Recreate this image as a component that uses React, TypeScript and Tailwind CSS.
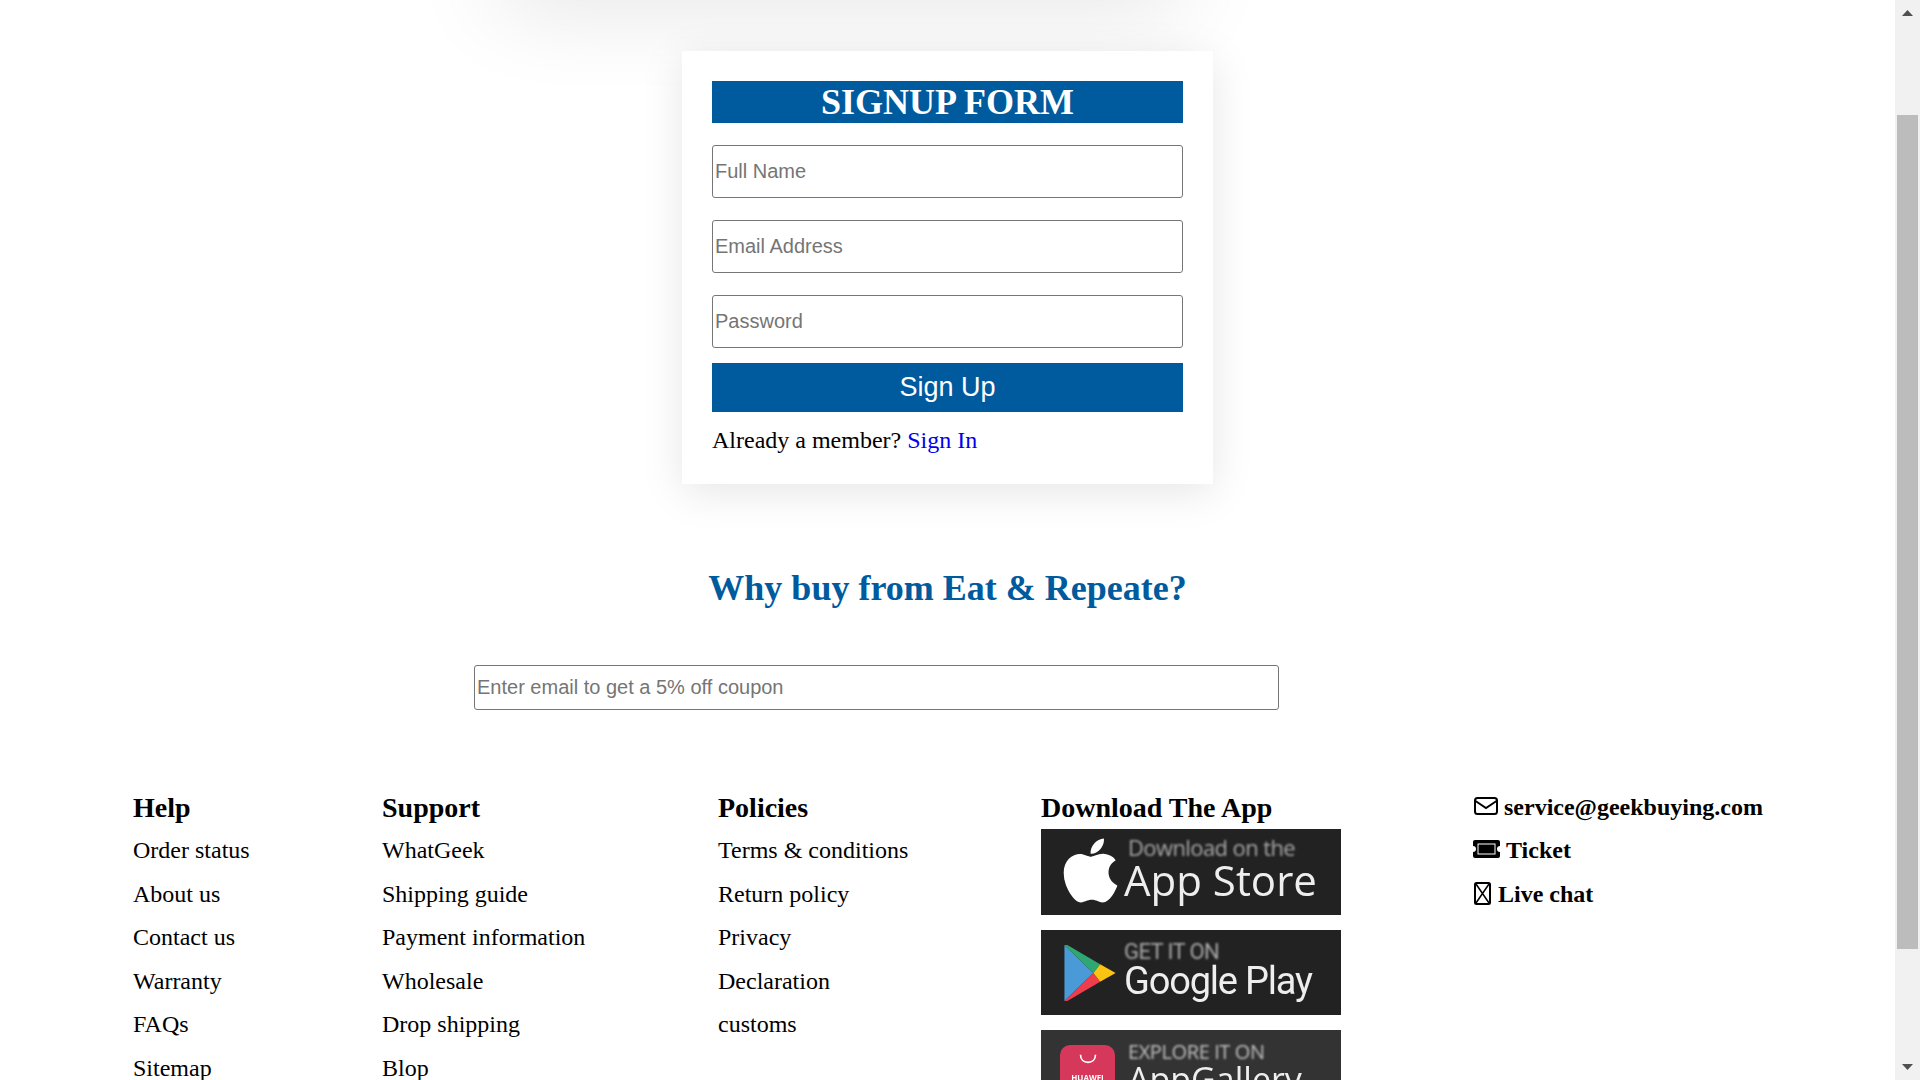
import React from "react";
import { FaApple } from "react-icons/fa";

const help = ["Order status", "About us", "Contact us", "Warranty", "FAQs", "Sitemap"];
const support = ["WhatGeek", "Shipping guide", "Payment information", "Wholesale", "Drop shipping", "Blop"];
const policies = ["Terms & conditions", "Return policy", "Privacy", "Declaration", "customs"];

function Column({ title, items, className }: { title: string; items: string[]; className: string }) {
  return (
    <div className={className}>
      <h3 className="text-[28px] font-bold leading-[25px] text-black">{title}</h3>
      <ul className="mt-[15px]">
        {items.map((i) => (
          <li key={i} className="h-[43.5px] text-[24px] leading-[30px] text-black">{i}</li>
        ))}
      </ul>
    </div>
  );
}

const inputClass =
  "block w-full h-[53px] border border-[#767676] rounded-[3px] px-[2px] text-[20px] font-['Liberation_Sans',sans-serif] placeholder:text-[#757575] bg-white outline-none";

function AppStore() {
  return (
    <div className="flex h-[86px] w-[300px] shrink-0 overflow-hidden bg-[#222222] pl-[13px] font-['Open_Sans',sans-serif] text-[#eeeeee]">
      <div className="mt-[5px] w-[70px] shrink-0 blur-[0.7px]"><FaApple size={73} color="#ffffff" /></div>
      <div className="flex flex-col whitespace-nowrap">
        <span className="ml-[4px] mt-[7px] text-[22px] leading-[22px] tracking-[-0.6px] text-[#a8a8a8] blur-[0.8px]">Download on the</span>
        <span className="text-[42px] leading-[44px] blur-[0.7px]">App Store</span>
      </div>
    </div>
  );
}

function GooglePlay() {
  return (
    <div className="flex h-[85px] w-[300px] shrink-0 overflow-hidden bg-[#222222] pl-[23px] font-['Roboto',sans-serif] text-[#eeeeee]">
      <svg className="mt-[15px] shrink-0 blur-[0.6px]" width="53" height="56" viewBox="0 0 54 58">
        <polygon points="0,0 30,29 0,58" fill="#4a9ad8" />
        <polygon points="0,0 3,0 37,20 30,29" fill="#2fa772" />
        <polygon points="0,58 3,58 37,38 30,29" fill="#ee3d4b" />
        <polygon points="37,20 53,29 37,38 30,29" fill="#fbc412" />
      </svg>
      <div className="ml-[7px] flex flex-col whitespace-nowrap">
        <span className="mt-[12px] text-[22px] leading-[20px] tracking-[-0.6px] text-[#a8a8a8] blur-[0.8px]">GET IT ON</span>
        <span className="text-[38px] leading-[38px] tracking-[-1.2px] blur-[0.7px]">Google Play</span>
      </div>
    </div>
  );
}

function AppGallery() {
  return (
    <div className="flex h-[85px] w-[300px] shrink-0 overflow-hidden bg-[#333333] pl-[19px] font-['Open_Sans',sans-serif] text-[#eeeeee]">
      <div className="mt-[15px] flex h-[55px] w-[55px] shrink-0 flex-col items-center rounded-[10px] bg-[#d5385a] blur-[0.6px]">
        <svg className="mt-[9px]" width="20" height="10" viewBox="0 0 22 12"><path d="M2 1c0 6 4 9 9 9s9-3 9-9" fill="none" stroke="#fff" strokeWidth="2" /></svg>
        <span className="mt-[9px] text-[8px] font-bold leading-[10px] text-white">HUAWEI</span>
      </div>
      <div className="ml-[13px] flex flex-col whitespace-nowrap">
        <span className="mt-[12px] text-[20px] leading-[20px] tracking-[-0.4px] text-[#c0c0c0] blur-[0.8px]">EXPLORE IT ON</span>
        <span className="text-[34px] leading-[34px] blur-[0.7px]">AppGallery</span>
      </div>
    </div>
  );
}

function ContactIcon({ kind }: { kind: "mail" | "ticket" | "chat" }) {
  if (kind === "mail")
    return (
      <svg width="24" height="18" viewBox="0 0 24 18" fill="none" stroke="#000" strokeWidth="2" className="shrink-0">
        <rect x="1" y="1" width="22" height="16" rx="2.5" />
        <path d="M1.5 4 L12 11 L22.5 4" />
      </svg>
    );
  if (kind === "ticket")
    return (
      <svg width="27" height="18" viewBox="0 0 27 18" className="shrink-0">
        <path d="M2 0h23a2 2 0 0 1 2 2v4a3 3 0 0 0 0 6v4a2 2 0 0 1-2 2H2a2 2 0 0 1-2-2v-4a3 3 0 0 0 0-6V2a2 2 0 0 1 2-2z" fill="#000" />
        <rect x="5" y="4" width="17" height="10" fill="#000" stroke="#fff" strokeWidth="1" />
      </svg>
    );
  return (
    <svg width="17" height="23" viewBox="0 0 17 23" fill="none" stroke="#000" strokeWidth="2" className="shrink-0">
      <rect x="1" y="1" width="15" height="21" rx="1.5" />
      <path d="M2 2 L15 21 M15 2 L2 21" strokeWidth="1.5" />
    </svg>
  );
}

function Scrollbar() {
  return (
    <div className="flex h-full w-[25px] shrink-0 flex-col items-center bg-[#f1f1f1]">
      <div className="flex h-[26px] w-full items-center justify-center">
        <svg width="11" height="6" viewBox="0 0 11 6"><polygon points="5.5,0 11,6 0,6" fill="#505050" /></svg>
      </div>
      <div className="h-[89px] shrink-0" />
      <div className="h-[834px] w-[21px] shrink-0 bg-[#bcbcbc]" />
      <div className="flex-1" />
      <div className="flex h-[26px] w-full items-center justify-center">
        <svg width="11" height="6" viewBox="0 0 11 6"><polygon points="0,0 11,0 5.5,6" fill="#505050" /></svg>
      </div>
    </div>
  );
}

export default function App() {
  return (
    <div className="flex h-screen w-full overflow-hidden bg-white font-['Liberation_Serif',serif] text-black">
      <main className="h-full min-w-0 flex-1 overflow-hidden">
        <div className="-mt-[60px] ml-[500px] h-[60px] w-[680px] shadow-[0_0_95px_rgba(0,0,0,0.14)]" />
        <div className="mx-auto mt-[51px] w-[531px] bg-white p-[30px] shadow-[0_8px_40px_rgba(0,0,0,0.1)]">
          <h1 className="h-[42px] bg-[#005a9e] text-center text-[36px] font-bold leading-[42px] text-white">SIGNUP FORM</h1>
          <input className={`${inputClass} mt-[22px]`} placeholder="Full Name" />
          <input className={`${inputClass} mt-[22px]`} placeholder="Email Address" />
          <input className={`${inputClass} mt-[22px]`} placeholder="Password" />
          <button className="mt-[15px] block h-[49px] w-full bg-[#005a9e] text-center font-['Liberation_Sans',sans-serif] text-[27px] text-white">Sign Up</button>
          <p className="mt-[14px] text-[24px] leading-[28px]">
            Already a member? <a className="text-[#0000ee]">Sign In</a>
          </p>
        </div>
        <h2 className="mt-[84px] text-center text-[36px] font-bold leading-[41px] text-[#005a9e]">Why buy from Eat &amp; Repeate?</h2>
        <div className="ml-[474px] mt-[56px] w-[805px]">
          <input className="block h-[45px] w-full rounded-[3px] border border-[#767676] bg-white px-[2px] font-['Liberation_Sans',sans-serif] text-[20px] outline-none placeholder:text-[#757575]" placeholder="Enter email to get a 5% off coupon" />
        </div>
        <footer className="mt-[85px] flex pl-[133px]">
          <Column title="Help" items={help} className="w-[249px] shrink-0" />
          <Column title="Support" items={support} className="w-[336px] shrink-0" />
          <Column title="Policies" items={policies} className="w-[323px] shrink-0" />
          <div className="w-[432px] shrink-0">
            <h3 className="text-[28px] font-bold leading-[25px]">Download The App</h3>
            <div className="mt-[9px] flex flex-col gap-[15px]">
              <AppStore />
              <GooglePlay />
              <AppGallery />
            </div>
          </div>
          <div className="-mt-[1px] shrink-0 text-[24px] font-bold">
            <div className="flex h-[43px] items-start gap-[6px] leading-[27px]"><span className="ml-[1px] mt-[3px]"><ContactIcon kind="mail" /></span>service@geekbuying.com</div>
            <div className="flex h-[44px] items-start gap-[6px] leading-[27px]"><span className="mt-[3px]"><ContactIcon kind="ticket" /></span>Ticket</div>
            <div className="flex h-[43.5px] items-start gap-[7px] leading-[27px]"><span className="ml-[1px] mt-[1px]"><ContactIcon kind="chat" /></span>Live chat</div>
          </div>
        </footer>
      </main>
      <Scrollbar />
    </div>
  );
}
